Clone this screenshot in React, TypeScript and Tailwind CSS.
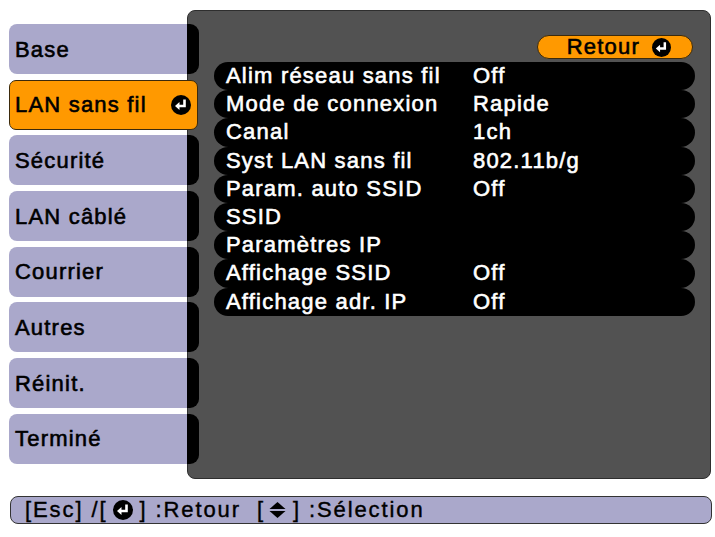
const FONT = { fontFamily: '"Liberation Sans", Arial, sans-serif' };

const TABS = ["Base", "LAN sans fil", "Sécurité", "LAN câblé", "Courrier", "Autres", "Réinit.", "Terminé"];
const ACTIVE = 1;

const ROWS: [string, string][] = [
  ["Alim réseau sans fil", "Off"],
  ["Mode de connexion", "Rapide"],
  ["Canal", "1ch"],
  ["Syst LAN sans fil", "802.11b/g"],
  ["Param. auto SSID", "Off"],
  ["SSID", ""],
  ["Paramètres IP", ""],
  ["Affichage SSID", "Off"],
  ["Affichage adr. IP", "Off"],
];

// projector OSD font: between regular and bold, slightly tracked
const OSD = "text-[22px] tracking-[1.2px] [-webkit-text-stroke:0.6px_currentColor]";

function EnterIcon({ size = 20 }: { size?: number }) {
  return (
    <svg width={size} height={size} viewBox="0 0 20 20" className="shrink-0">
      <circle cx="10" cy="10" r="10" fill="#000" />
      <path d="M13.5 4.5 V11 H8" stroke="#fff" strokeWidth="2.6" fill="none" strokeLinejoin="miter" />
      <polygon points="4,11 8.5,7 8.5,15" fill="#fff" />
    </svg>
  );
}

function UpDownIcon() {
  return (
    <svg width="17" height="18" viewBox="0 0 17 18" className="shrink-0">
      <polygon points="0.5,8 8.5,1 16.5,8" fill="#000" />
      <polygon points="0.5,10 8.5,17 16.5,10" fill="#000" />
    </svg>
  );
}

export default function App() {
  return (
    <div className="relative h-[537px] w-[715px] overflow-hidden bg-white" style={FONT}>
      <div className="flex pt-[10px]">
        {/* Left: tabs */}
        <div className="relative z-10 ml-[9px] mt-[14px] flex w-[190px] flex-col gap-[5.7px]">
          {TABS.map((t, i) =>
            i === ACTIVE ? (
              <div
                key={t}
                className={`flex h-[50px] w-[189px] items-center justify-between rounded-[7px] border border-[#3b2a0c] bg-[#ff9900] pl-[5px] pr-[6px] text-black ${OSD}`}
              >
                <span>{t}</span>
                <EnterIcon />
              </div>
            ) : (
              <div key={t} className="flex h-[50px] w-[190px]">
                <div className={`flex w-[178px] items-center rounded-l-[8px] bg-[#aaa8cb] pl-[6px] text-black ${OSD}`}>
                  {t}
                </div>
                <div className="w-[12px] rounded-r-[9px] bg-black" />
              </div>
            )
          )}
        </div>

        {/* Right: settings panel */}
        <div className="-ml-[12px] h-[469px] w-[524px] rounded-[8px] border border-[#2e2e2e] bg-[#525252] pl-[26px] pr-[15px] pt-[24px] shadow-[0_1px_0_#fff]">
          <div className="flex justify-end pr-[2px]">
            <div className={`flex h-[24px] w-[156px] items-center justify-end gap-[12px] rounded-full border border-[#3b2a0c] bg-[#ff9900] pr-[21px] leading-none text-black ${OSD}`}>
              <span>Retour</span>
              <EnterIcon size={19} />
            </div>
          </div>
          <div className="mt-[3px] flex flex-col">
            {ROWS.map(([label, value]) => (
              <div
                key={label}
                className={`flex h-[28.2px] items-center rounded-full bg-black pl-[12px] leading-none text-white ${OSD}`}
              >
                <span className="w-[247px]">{label}</span>
                <span>{value}</span>
              </div>
            ))}
          </div>
        </div>
      </div>

      {/* Bottom help bar */}
      <div className="ml-[10px] mt-[17px] flex h-[28px] w-[702px] items-center whitespace-pre rounded-[8px] border border-[#333] bg-[#aaa8cb] pl-[14px] text-[22px] leading-none tracking-[1.9px] text-black [-webkit-text-stroke:0.4px_currentColor]">
        <span>[Esc] /[</span>
        <span className="mx-[6px]">
          <EnterIcon />
        </span>
        <span>] :Retour  [</span>
        <span className="ml-[4px] mr-[7px]">
          <UpDownIcon />
        </span>
        <span>] :Sélection</span>
      </div>
    </div>
  );
}
